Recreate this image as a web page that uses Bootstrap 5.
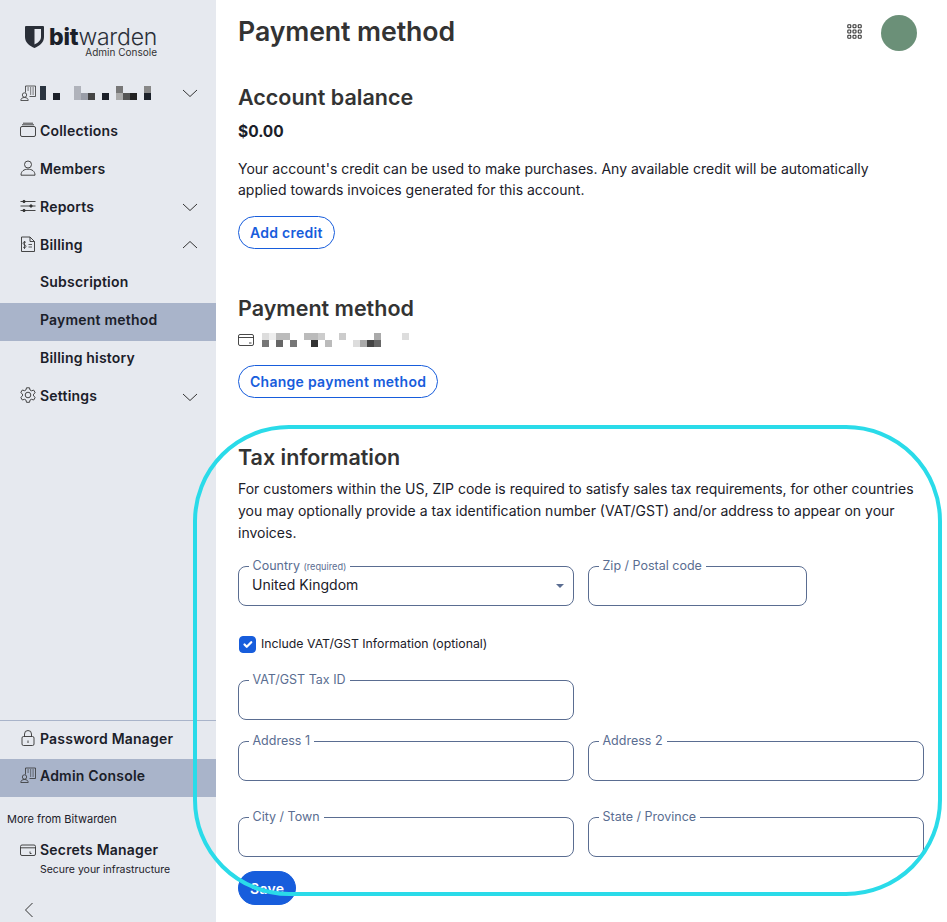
<!DOCTYPE html>
<html lang="en">
<head>
<meta charset="utf-8">
<title>Payment method</title>
<link href="https://cdn.jsdelivr.net/npm/bootstrap@5.3.0/dist/css/bootstrap.min.css" rel="stylesheet">
<style>
html,body{height:100%;overflow:hidden}
body{font-family:Inter,"Liberation Sans",sans-serif;color:#1b2029;background:#fff;position:relative}
.side{width:216px;height:922px;background:#e6e9ef;flex:none;padding-bottom:4px}
.logo-wrap{height:74px;padding:26px 0 0 25px}
.logo-gap{gap:5px}
.logo-word{font-size:23px;line-height:18px;letter-spacing:-.2px;color:#2a2f38;font-weight:300}
.logo-word b{font-weight:800;color:#1b2029}
.logo-sub{font-size:10px;line-height:11px;color:#333;text-align:right;width:132px;margin-top:-1px}
.nav-line{height:38px;padding:0 17px 2px 20px;gap:4px;font-size:14px;font-weight:600;letter-spacing:.2px;color:#1b2029}
.nav-line svg.ic{width:16px;height:16px;flex:none}
.nav-line.org{padding-bottom:0}
.nav-line.sub{padding-left:40px;padding-bottom:6px}
.nav-line.first-sub{margin-top:1px}
.nav-line.up{padding-bottom:6px}
.nav-line.pm{padding-bottom:4px}
.nav-line.on{background:#a9b4ca}
.chev{width:18px;height:10px;margin-left:auto;flex:none;margin-top:2px}
.org .chev{margin-top:0}
.up .chev{margin-top:4px}
.side-foot{border-top:1px solid #a9b4ca}
.more{font-size:11px;color:#1b2029;padding-left:7px;line-height:14px;margin-top:15px}
.sm-line{padding:15px 0 0 20px;gap:4px;font-size:14px;font-weight:600;letter-spacing:.2px;line-height:18px}
.sm-sub{font-size:10.5px;font-weight:400;padding-left:40px;line-height:14px;margin-top:4px}
.back{padding:25px 0 0 24px}
.page{padding:0 23px 0 22px;min-width:0;flex:1 1 auto}
.top-h{height:78px}
.title{font-size:26.7px;font-weight:600;color:#333;margin:0;line-height:34px;padding-top:14px;letter-spacing:-.1px}
.top-tools{padding-top:15px}
.apps{width:15px;height:15px;margin-top:-3px}
.avatar{width:36px;height:36px;border-radius:50%;background:#6b9078;margin:0 7px 0 19px}
.sec-h{font-size:21.5px;font-weight:600;color:#333;margin:0;line-height:28px}
.first-h{padding-top:5px}
.bal{font-size:15.5px;font-weight:700;line-height:20px;color:#1b2029;margin:11px 0 16px}
.txt{font-size:14px;line-height:21px;color:#1b2029;margin:0}
.bal-txt{max-width:670px}
.tax-txt{line-height:22px}
.pill{border:1px solid #175ddc;color:#175ddc;background:#fff;font-weight:600;font-size:14px;line-height:21px;letter-spacing:.27px;border-radius:17px;padding:5px 11px}
.pill:hover{background:#fff;color:#175ddc}
.add-btn{margin-top:16px}
.pill-fill{background:#175ddc;color:#fff;padding:6px 11px;height:34px}
.pill-fill:hover{background:#175ddc;color:#fff}
.row-f{--bs-gutter-x:14px;--bs-gutter-y:0}
fieldset.fld{border:1px solid #5a6d91;border-radius:8px;padding:0 13px;height:47px;margin-top:-7px;min-width:0}
fieldset.fld legend{float:none;width:auto;font-size:12.5px;line-height:14px;color:#5a6d91;padding:0 4px;margin:0 0 0 -3.500px}
fieldset.fld legend small{font-size:9.2px}
.fld input,.fld select{border:0;outline:0;background:transparent;width:100%;height:24px;padding:0;font-size:14px;color:#1b2029;display:block}
.fld select{appearance:none;-webkit-appearance:none;margin-top:-2px}
.fld-select{position:relative}
.caret{position:absolute;right:9px;top:10px;width:0;height:0;border-left:4.5px solid transparent;border-right:4.5px solid transparent;border-top:4px solid #5a6d91}
.chk{gap:5px;font-size:12.3px;line-height:18px;color:#1b2029}
.chk .form-check-input{width:17px;height:17px;margin:0 0 0 1px;border-radius:4px;background-color:#175ddc;border-color:#175ddc;flex:none}
.ring{position:absolute;left:193px;top:425px;width:749px;height:471px;border:4px solid #2adbe9;border-radius:96px;pointer-events:none}
.sec-pay{margin-top:45px}
.card-line{height:14px;margin:11px 0 18px}
.sec-tax{margin-top:45px}
.tax-p{margin-top:7px}
.tax-form{margin-top:22px}
.chk-row{margin:26px 0 24px}
.gap-row{margin-top:21px}
.gap-row2{margin-top:36px}
.save-btn{margin-top:14px}
</style>
</head>
<body class="d-flex">
<aside class="side d-flex flex-column">
  <div class="logo-wrap">
    <div class="d-flex align-items-center logo-gap">
      <svg width="19" height="22" viewBox="0 0 19 22"><path fill="#2a2f38" fill-rule="evenodd" d="M1 0h17a1 1 0 0 1 1 1v10c0 6-5 9-9.500 11C5 20 0 17 0 11V1a1 1 0 0 1 1-1zm8.500 3v15.500c3-1.600 6.500-3.800 6.500-7.500V3z"/></svg>
      <div class="logo-word"><b>bit</b>warden</div>
    </div>
    <div class="logo-sub">Admin Console</div>
  </div>
  <div class="nav-line org d-flex align-items-center">
    <svg class="ic" viewBox="0 0 16 16" fill="none" stroke="#333" stroke-width=".8"><path d="M5.500 7.500V1h10v10.500H9.500"/><path d="M7.500 3h1.200M10 3h1.200M12.500 3h1.200M7.500 5h1.200M10 5h1.200M12.500 5h1.200M10 7h1.200M12.500 7h1.200M10 9h1.200M12.500 9h1.200" stroke-width="1.200"/><circle cx="4.500" cy="10" r="2.200"/><path d="M.8 15.500c0-2 1.500-3 3.700-3s3.700 1 3.700 3z"/></svg>
    <svg width="115" height="14" viewBox="39 86 115 14" class="flex-none">
      <rect x="39" y="86" width="6" height="14" fill="#2a3440"/><rect x="52" y="93" width="7" height="7" fill="#1b2029"/>
      <rect x="73" y="86" width="7" height="14" fill="#b0b3bb"/><rect x="80" y="93" width="7" height="7" fill="#9a9ea8"/><rect x="87" y="93" width="7" height="7" fill="#444"/>
      <rect x="101" y="93" width="7" height="7" fill="#1b2029"/>
      <rect x="115" y="86" width="7" height="7" fill="#777"/><rect x="115" y="93" width="7" height="7" fill="#aaa"/><rect x="122" y="93" width="7" height="7" fill="#555"/><rect x="129" y="93" width="7" height="7" fill="#222"/>
      <rect x="143" y="86" width="7" height="7" fill="#888"/><rect x="143" y="93" width="7" height="7" fill="#1b2029"/>
    </svg>
    <svg class="chev" viewBox="0 0 18 10" fill="none" stroke="#333"><path d="M2 2l7 6.500 7-6.500"/></svg>
  </div>
  <div class="nav-line d-flex align-items-center">
    <svg class="ic" viewBox="0 0 16 16" fill="none" stroke="#333" stroke-width=".9"><rect x=".5" y="4.500" width="15" height="10" rx="1.500"/><path d="M2 2.800h12M3 1.200h10"/></svg><span>Collections</span>
  </div>
  <div class="nav-line d-flex align-items-center">
    <svg class="ic" viewBox="0 0 16 16" fill="none" stroke="#333" stroke-width=".9"><circle cx="8" cy="4.500" r="3.500"/><path d="M1 15.200c0-4 3-6 7-6s7 2 7 6z"/></svg><span>Members</span>
  </div>
  <div class="nav-line d-flex align-items-center">
    <svg class="ic" viewBox="0 0 16 16" fill="none" stroke="#333" stroke-width=".9"><path d="M.5 3.500h15M.5 8h15M.5 12.500h15"/><circle cx="4" cy="3.500" r="1.200" fill="#333"/><circle cx="11" cy="8" r="1.200" fill="#333"/><circle cx="4" cy="12.500" r="1.200" fill="#333"/></svg><span>Reports</span>
    <svg class="chev" viewBox="0 0 18 10" fill="none" stroke="#333"><path d="M2 2l7 6.500 7-6.500"/></svg>
  </div>
  <div class="nav-line d-flex align-items-center">
    <svg class="ic" viewBox="0 0 16 16" fill="none" stroke="#333" stroke-width=".9"><path d="M1.500 1h8.500l4.500 4.500v10h-13z"/><path d="M10 1v4.500h4.500"/><path d="M6 6.500c-1-1-3-.8-3 .8s3 1.200 3 3-2.200 1.500-3 .8M4.500 5v8M8.500 8.500h3.500M8.500 11h3.500" stroke-width=".8"/></svg><span>Billing</span>
    <svg class="chev" viewBox="0 0 18 10" fill="none" stroke="#333"><path d="M2 8l7-6.500 7 6.500"/></svg>
  </div>
  <div class="nav-line sub first-sub d-flex align-items-center">Subscription</div>
  <div class="nav-line sub on d-flex align-items-center">Payment method</div>
  <div class="nav-line sub d-flex align-items-center">Billing history</div>
  <div class="nav-line up d-flex align-items-center">
    <svg class="ic" viewBox="0 0 16 16" fill="none" stroke="#333" stroke-width=".9"><path d="M6.500.8h3l.5 2.200 1.500.8 2.200-.7 1.500 2.600-1.700 1.500v1.700l1.700 1.500-1.500 2.600-2.200-.7-1.500.8-.5 2.200h-3l-.5-2.200-1.500-.8-2.200.7L.8 10.400l1.700-1.500V7.100L.8 5.600l1.500-2.600 2.200.7 1.500-.8z"/><circle cx="8" cy="8" r="2.800"/></svg><span>Settings</span>
    <svg class="chev" viewBox="0 0 18 10" fill="none" stroke="#333"><path d="M2 2l7 6.500 7-6.500"/></svg>
  </div>
  <div class="side-foot mt-auto">
    <div class="nav-line pm d-flex align-items-center">
      <svg class="ic" viewBox="0 0 16 16" fill="none" stroke="#333" stroke-width=".9"><rect x="2" y="6.500" width="12" height="9" rx="1.500"/><path d="M4.500 6.500V4a3.500 3.500 0 0 1 7 0v2.500M8 10.500v2.500"/></svg><span>Password Manager</span>
    </div>
    <div class="nav-line up on d-flex align-items-center">
      <svg class="ic" viewBox="0 0 16 16" fill="none" stroke="#333" stroke-width=".8"><path d="M5.500 7.500V1h10v10.500H9.500"/><path d="M7.500 3h1.200M10 3h1.200M12.500 3h1.200M7.500 5h1.200M10 5h1.200M12.500 5h1.200M10 7h1.200M12.500 7h1.200M10 9h1.200M12.500 9h1.200" stroke-width="1.200"/><circle cx="4.500" cy="10" r="2.200"/><path d="M.8 15.500c0-2 1.500-3 3.700-3s3.700 1 3.700 3z"/></svg><span>Admin Console</span>
    </div>
    <div class="more">More from Bitwarden</div>
    <div class="sm-line d-flex align-items-center">
      <svg class="ic" width="16" height="16" viewBox="0 0 16 16" fill="none" stroke="#333" stroke-width=".9"><rect x=".5" y="3" width="15" height="10.500" rx="1.500"/><path d="M.5 5.800h15M10 11.500h1.500M10 9.500v2"/></svg><span>Secrets Manager</span>
    </div>
    <div class="sm-sub">Secure your infrastructure</div>
    <div class="back"><svg width="10" height="16" viewBox="0 0 10 16" fill="none" stroke="#333" class="d-block"><path d="M8.500 1l-7 7 7 7"/></svg></div>
  </div>
</aside>
<main class="page">
  <div class="top-h d-flex justify-content-between">
    <h1 class="title">Payment method</h1>
    <div class="d-flex align-items-center top-tools align-self-start">
      <svg class="apps" viewBox="0 0 15 15" fill="none" stroke="#333" stroke-width="1.100"><rect x=".8" y=".8" width="3" height="3" rx=".8"/><rect x="6" y=".8" width="3" height="3" rx=".8"/><rect x="11.200" y=".8" width="3" height="3" rx=".8"/><rect x=".8" y="6" width="3" height="3" rx=".8"/><rect x="6" y="6" width="3" height="3" rx=".8"/><rect x="11.200" y="6" width="3" height="3" rx=".8"/><rect x=".8" y="11.200" width="3" height="3" rx=".8"/><rect x="6" y="11.200" width="3" height="3" rx=".8"/><rect x="11.200" y="11.200" width="3" height="3" rx=".8"/></svg>
      <div class="avatar"></div>
    </div>
  </div>
  <section>
    <h2 class="sec-h first-h">Account balance</h2>
    <p class="bal">$0.00</p>
    <p class="txt bal-txt">Your account's credit can be used to make purchases. Any available credit will be automatically applied towards invoices generated for this account.</p>
    <button type="button" class="btn pill add-btn">Add credit</button>
  </section>
  <section class="sec-pay">
    <h2 class="sec-h">Payment method</h2>
    <div class="d-flex align-items-center card-line">
      <svg width="16" height="12" viewBox="0 0 16 12" fill="none" stroke="#333" stroke-width=".9" class="flex-none"><rect x=".5" y=".5" width="15" height="11" rx="1.500"/><path d="M.5 3.500h15M11 9h2.500"/></svg>
      <svg width="147" height="14" viewBox="262 332 147 14" class="ms-2">
        <rect x="262" y="332" width="7" height="7" fill="#ddd"/><rect x="269" y="332" width="7" height="7" fill="#eee"/><rect x="276" y="332" width="14" height="7" fill="#bbb"/>
        <rect x="262" y="339" width="7" height="7" fill="#777"/><rect x="276" y="339" width="7" height="7" fill="#666"/><rect x="290" y="339" width="7" height="7" fill="#777"/>
        <rect x="304" y="332" width="14" height="7" fill="#bbb"/><rect x="318" y="332" width="7" height="7" fill="#ccc"/><rect x="339" y="332" width="7" height="7" fill="#ccc"/>
        <rect x="311" y="339" width="7" height="7" fill="#333"/><rect x="325" y="339" width="7" height="7" fill="#bbb"/>
        <rect x="353" y="339" width="7" height="7" fill="#ddd"/><rect x="360" y="339" width="7" height="7" fill="#aaa"/><rect x="367" y="339" width="7" height="7" fill="#444"/><rect x="374" y="339" width="7" height="7" fill="#666"/><rect x="374" y="332" width="7" height="7" fill="#aaa"/>
        <rect x="402" y="332" width="7" height="7" fill="#ddd"/>
      </svg>
    </div>
    <button type="button" class="btn pill">Change payment method</button>
  </section>
  <section class="sec-tax">
    <h2 class="sec-h">Tax information</h2>
    <p class="txt tax-txt tax-p">For customers within the US, ZIP code is required to satisfy sales tax requirements, for other countries you may optionally provide a tax identification number (VAT/GST) and/or address to appear on your invoices.</p>
    <form class="tax-form">
      <div class="row row-f">
        <div class="col-6"><fieldset class="fld fld-select"><legend>Country <small>(required)</small></legend>
          <select aria-label="Country"><option>United Kingdom</option></select><span class="caret"></span></fieldset></div>
        <div class="col-4"><fieldset class="fld"><legend>Zip / Postal code</legend><input type="text"></fieldset></div>
      </div>
      <div class="form-check d-flex align-items-center chk p-0 chk-row">
        <input class="form-check-input" type="checkbox" id="vat" checked>
        <label for="vat">Include VAT/GST Information (optional)</label>
      </div>
      <div class="row row-f">
        <div class="col-6"><fieldset class="fld"><legend>VAT/GST Tax ID</legend><input type="text"></fieldset></div>
      </div>
      <div class="row row-f gap-row">
        <div class="col-6"><fieldset class="fld"><legend>Address 1</legend><input type="text"></fieldset></div>
        <div class="col-6"><fieldset class="fld"><legend>Address 2</legend><input type="text"></fieldset></div>
      </div>
      <div class="row row-f gap-row2">
        <div class="col-6"><fieldset class="fld"><legend>City / Town</legend><input type="text"></fieldset></div>
        <div class="col-6"><fieldset class="fld"><legend>State / Province</legend><input type="text"></fieldset></div>
      </div>
      <button type="submit" class="btn pill pill-fill save-btn">Save</button>
    </form>
  </section>
</main>
<div class="ring"></div>
</body>
</html>
